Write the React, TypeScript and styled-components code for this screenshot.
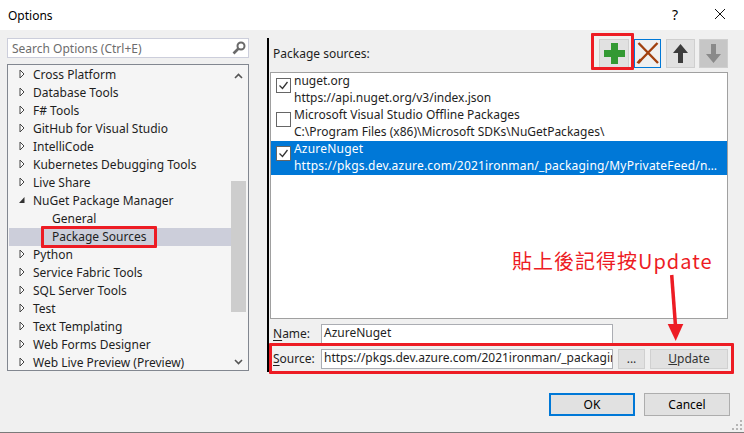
import styled, { createGlobalStyle } from 'styled-components';

const GlobalStyle = createGlobalStyle`
 html, body {
  margin: 0;
  padding: 0;
  background: #f0f0f0;
 }
 #root {
  width: 744px;
  height: 433px;
 }
`;

const Dialog = styled.div`
 position: relative;
 display: flex;
 flex-direction: column;
 width: 744px;
 height: 433px;
 box-sizing: border-box;
 overflow: hidden;
 background: #f0f0f0;
 border-bottom: 1px solid #7a7a7a;
 font-family: 'Noto Sans', 'Open Sans', sans-serif;
 font-size: 12px;
 color: #1e1e1e;
`;

const TitleBar = styled.div`
 display: flex;
 align-items: center;
 justify-content: space-between;
 height: 30px;
 padding: 0 19px 0 8px;
 background: #fff;
 color: #000;
`;

const TitleIcons = styled.div`
 display: flex;
 align-items: center;
 gap: 37px;
 padding-bottom: 2px;
 font-size: 14px;
`;

const Body = styled.div`
 display: flex;
 height: 343px;
 box-sizing: border-box;
 padding: 8px 0 0 7px;
`;

const LeftPane = styled.div`
 display: flex;
 flex-direction: column;
 gap: 6px;
 width: 242px;
`;

const SearchBox = styled.div`
 display: flex;
 align-items: center;
 justify-content: space-between;
 height: 20px;
 padding: 0 2px 0 4px;
 box-sizing: border-box;
 background: #fff;
 border: 1px solid #cccedb;
 color: #6d6d6d;
`;

const Tree = styled.div`
 display: flex;
 height: 307px;
 box-sizing: border-box;
 background: #f5f5f5;
 border: 1px solid #828790;
`;

const TreeRows = styled.div`
 flex: 1;
 padding: 1px 0 0 1px;
`;

const Row = styled.div<{ $selected?: boolean; $child?: boolean }>`
 display: flex;
 align-items: center;
 height: 18px;
 box-sizing: border-box;
 padding: 0 0 2px ${(p) => (p.$child ? '43px' : '10px')};
 background: ${(p) => (p.$selected ? '#ccceda' : 'transparent')};
 white-space: nowrap;
`;

const Arrow = styled.svg`
 flex: none;
 width: 14px;
 height: 10px;
`;

const Scrollbar = styled.div`
 flex: none;
 display: flex;
 flex-direction: column;
 width: 17px;
 padding-top: 8px;
`;

const ScrollChevron = styled.svg<{ $gap?: number }>`
 flex: none;
 width: 9px;
 height: 6px;
 margin: ${(p) => p.$gap ?? 0}px 0 0 3px;
`;

const Thumb = styled.div`
 flex: none;
 width: 15px;
 height: 131px;
 margin-top: 102px;
 background: #cdcdcd;
`;

const RightPane = styled.div`
 display: flex;
 flex-direction: column;
 width: 458px;
 height: 334px;
 margin-left: 18px;
 padding-left: 1px;
 border-left: 2px solid #000;
`;

const SourcesHeader = styled.div`
 display: flex;
 justify-content: space-between;
 height: 34px;
 padding-left: 3px;
`;

const HeaderLabel = styled.span`
 align-self: center;
 padding-bottom: 4px;
`;

const Toolbar = styled.div`
 display: flex;
 align-items: flex-start;
 padding-top: 1px;
`;

const ToolButton = styled.div<{ $width: number; $gap?: number; $variant?: 'focus' | 'disabled' }>`
 display: flex;
 align-items: center;
 justify-content: center;
 width: ${(p) => p.$width}px;
 height: 29px;
 margin-left: ${(p) => p.$gap ?? 0}px;
 box-sizing: border-box;
 background: ${(p) => (p.$variant === 'disabled' ? '#c6c6c6' : p.$variant === 'focus' ? '#f0f0f0' : '#e1e1e1')};
 border: 1px solid ${(p) => (p.$variant === 'focus' ? '#0078d7' : '#cfcfcf')};
`;

const SourceList = styled.div`
 height: 247px;
 width: 458px;
 box-sizing: border-box;
 background: #fff;
 border: 1px solid #a0a0a0;
`;

const SourceItem = styled.div<{ $selected?: boolean }>`
 display: flex;
 align-items: flex-start;
 height: 34px;
 padding-left: 5px;
 background: ${(p) => (p.$selected ? '#0078d7' : 'transparent')};
 color: ${(p) => (p.$selected ? '#fff' : '#1e1e1e')};
 letter-spacing: ${(p) => (p.$selected ? '0.2px' : '0')};
`;

const Check = styled.div`
 flex: none;
 display: flex;
 align-items: center;
 justify-content: center;
 width: 13px;
 height: 13px;
 margin: 5px 3px 0 0;
 background: #fff;
 border: 1px solid #666;
`;

const SourceText = styled.div`
 width: 430px;
 margin-top: -1px;
 line-height: 17px;
 white-space: nowrap;
 overflow: hidden;
 text-overflow: ellipsis;
`;

const FieldRow = styled.div`
 display: flex;
 align-items: center;
 height: 20px;
 margin-top: 5px;
 padding-left: 3px;
`;

const FieldLabel = styled.label`
 width: 48px;
 padding-bottom: 2px;
 & u {
  text-underline-offset: 2px;
 }
`;

const Input = styled.div`
 flex: none;
 width: 292px;
 height: 20px;
 box-sizing: border-box;
 padding: 0 2px;
 line-height: 16px;
 background: #fff;
 border: 1px solid #abadb3;
 white-space: nowrap;
 overflow: hidden;
`;

const Button = styled.div<{ $width: number }>`
 flex: none;
 display: flex;
 align-items: center;
 justify-content: center;
 width: ${(p) => p.$width}px;
 height: 20px;
 margin-left: 5px;
 padding-bottom: 2px;
 box-sizing: border-box;
 background: #e1e1e1;
 border: 1px solid #d0d0d0;
 color: #333;
`;

const Footer = styled.div`
 display: flex;
 justify-content: flex-end;
 gap: 9px;
 padding: 20px 14px 0 0;
`;

const FooterButton = styled.div<{ $primary?: boolean }>`
 display: flex;
 align-items: center;
 justify-content: center;
 width: 86px;
 height: 23px;
 box-sizing: border-box;
 background: #e1e1e1;
 border: ${(p) => (p.$primary ? '2px solid #0078d7' : '1px solid #adadad')};
 color: #000;
`;

const Grip = styled.svg`
 position: absolute;
 right: 2px;
 bottom: 2px;
 width: 10px;
 height: 10px;
`;

const Highlight = styled.div<{ $x: number; $y: number; $w: number; $h: number }>`
 position: absolute;
 left: ${(p) => p.$x}px;
 top: ${(p) => p.$y}px;
 width: ${(p) => p.$w}px;
 height: ${(p) => p.$h}px;
 box-sizing: border-box;
 border: 3px solid #ed1c24;
 border-radius: 1px;
`;

const Note = styled.div`
 position: absolute;
 left: 512px;
 top: 247px;
 color: #ed1c24;
 font-family: 'Noto Sans CJK TC', 'Noto Sans', sans-serif;
 font-size: 20px;
 line-height: 28px;
 letter-spacing: 1px;
 white-space: nowrap;
`;

const NoteArrow = styled.svg`
 position: absolute;
 left: 664px;
 top: 272px;
 width: 24px;
 height: 72px;
`;

const treeItems = [
 'Cross Platform',
 'Database Tools',
 'F# Tools',
 'GitHub for Visual Studio',
 'IntelliCode',
 'Kubernetes Debugging Tools',
 'Live Share',
];

const treeItemsAfter = [
 'Python',
 'Service Fabric Tools',
 'SQL Server Tools',
 'Test',
 'Text Templating',
 'Web Forms Designer',
 'Web Live Preview (Preview)',
];

const sources = [
 { name: 'nuget.org', url: 'https://api.nuget.org/v3/index.json', checked: true },
 { name: 'Microsoft Visual Studio Offline Packages', url: 'C:\\Program Files (x86)\\Microsoft SDKs\\NuGetPackages\\', checked: false },
 { name: 'AzureNuget', url: 'https://pkgs.dev.azure.com/2021ironman/_packaging/MyPrivateFeed/nuget/v3/index.json', checked: true, selected: true },
];

const Collapsed = () => (
 <Arrow viewBox='0 0 14 10'>
  <path d='M1 1 L5 5 L1 9 Z' fill='#fff' stroke='#444' strokeWidth='1' />
 </Arrow>
);

const Expanded = () => (
 <Arrow viewBox='0 0 14 10'>
  <path d='M5.5 2 V8 H0 Z' fill='#333' />
 </Arrow>
);

const App = () => (
 <>
  <GlobalStyle />
  <Dialog>
   <TitleBar>
    <span>Options</span>
    <TitleIcons>
     <span>?</span>
     <svg width='10' height='10' viewBox='0 0 10 10'>
      <path d='M0 0 L10 10 M10 0 L0 10' stroke='#111' strokeWidth='1' fill='none' />
     </svg>
    </TitleIcons>
   </TitleBar>
   <Body>
    <LeftPane>
     <SearchBox>
      <span>Search Options (Ctrl+E)</span>
      <svg width='14' height='14' viewBox='0 0 14 14'>
       <circle cx='9' cy='5' r='3.5' fill='none' stroke='#6a6a6a' strokeWidth='2' />
       <path d='M6.5 7.5 L1.5 12.5' stroke='#6a6a6a' strokeWidth='2.6' />
      </svg>
     </SearchBox>
     <Tree>
      <TreeRows>
       {treeItems.map((item) => (
        <Row key={item}>
         <Collapsed />
         {item}
        </Row>
       ))}
       <Row>
        <Expanded />
        NuGet Package Manager
       </Row>
       <Row $child>General</Row>
       <Row $child $selected>Package Sources</Row>
       {treeItemsAfter.map((item) => (
        <Row key={item}>
         <Collapsed />
         {item}
        </Row>
       ))}
      </TreeRows>
      <Scrollbar>
       <ScrollChevron viewBox='0 0 9 6'>
        <path d='M1 5 L4.5 1.5 L8 5' stroke='#555' strokeWidth='1.6' fill='none' />
       </ScrollChevron>
       <Thumb />
       <ScrollChevron $gap={47} viewBox='0 0 9 6'>
        <path d='M1 1 L4.5 4.5 L8 1' stroke='#555' strokeWidth='1.6' fill='none' />
       </ScrollChevron>
      </Scrollbar>
     </Tree>
    </LeftPane>
    <RightPane>
     <SourcesHeader>
      <HeaderLabel>Package sources:</HeaderLabel>
      <Toolbar>
       <ToolButton $width={30}>
        <svg width='21' height='21' viewBox='0 0 21 21'>
         <path d='M7 0 H14 V7 H21 V14 H14 V21 H7 V14 H0 V7 H7 Z' fill='#339933' />
        </svg>
       </ToolButton>
       <ToolButton $width={27} $gap={5} $variant='focus'>
        <svg width='24' height='23' viewBox='0 0 24 23'>
         <path d='M2.5 1 L22 21 M21.5 1 L3 20' stroke='#a1400f' strokeWidth='2.4' fill='none' />
         <path d='M0.5 20.5 L4 16.5 L6 18.5 L3 22 Z' fill='#a1400f' />
        </svg>
       </ToolButton>
       <ToolButton $width={29} $gap={5}>
        <svg width='15' height='19' viewBox='0 0 15 19'>
         <path d='M7.5 0 L15 9 H10 V19 H5 V9 H0 Z' fill='#3c3c3c' />
        </svg>
       </ToolButton>
       <ToolButton $width={29} $gap={4} $variant='disabled'>
        <svg width='15' height='19' viewBox='0 0 15 19'>
         <path d='M7.5 19 L15 10 H10 V0 H5 V10 H0 Z' fill='#8a8a8a' />
        </svg>
       </ToolButton>
      </Toolbar>
     </SourcesHeader>
     <SourceList>
      {sources.map((s) => (
       <SourceItem key={s.name} $selected={s.selected}>
        <Check>
         {s.checked && (
          <svg width='11' height='11' viewBox='0 0 11 11'>
           <path d='M1.5 5.5 L4.5 8.5 L9.5 2' stroke='#333' strokeWidth='1.3' fill='none' />
          </svg>
         )}
        </Check>
        <SourceText>
         {s.name}
         <br />
         {s.url}
        </SourceText>
       </SourceItem>
      ))}
     </SourceList>
     <FieldRow>
      <FieldLabel><u>N</u>ame:</FieldLabel>
      <Input>AzureNuget</Input>
     </FieldRow>
     <FieldRow>
      <FieldLabel><u>S</u>ource:</FieldLabel>
      <Input>https://pkgs.dev.azure.com/2021ironman/_packaging/MyPrivateFeed/nuget/v3/index.json</Input>
      <Button $width={27}>...</Button>
      <Button $width={78}><span><u>U</u>pdate</span></Button>
     </FieldRow>
    </RightPane>
   </Body>
   <Footer>
    <FooterButton $primary>OK</FooterButton>
    <FooterButton>Cancel</FooterButton>
   </Footer>
   <Grip viewBox='0 0 10 10'>
    <path d='M8 0h2v2H8z M4 4h2v2H4z M8 4h2v2H8z M0 8h2v2H0z M4 8h2v2H4z M8 8h2v2H8z' fill='#b5b5b5' />
   </Grip>
   <Highlight $x={41} $y={226} $w={116} $h={22} />
   <Highlight $x={591} $y={33} $w={43} $h={37} />
   <Highlight $x={269} $y={343} $w={465} $h={31} />
   <Note>貼上後記得按Update</Note>
   <NoteArrow viewBox='0 0 24 72'>
    <path d='M7.7 3 L11.5 54' stroke='#ed1c24' strokeWidth='3.5' fill='none' />
    <path d='M3.7 52 L19.3 52 L11.7 69 Z' fill='#ed1c24' />
   </NoteArrow>
  </Dialog>
 </>
);

export default App;
